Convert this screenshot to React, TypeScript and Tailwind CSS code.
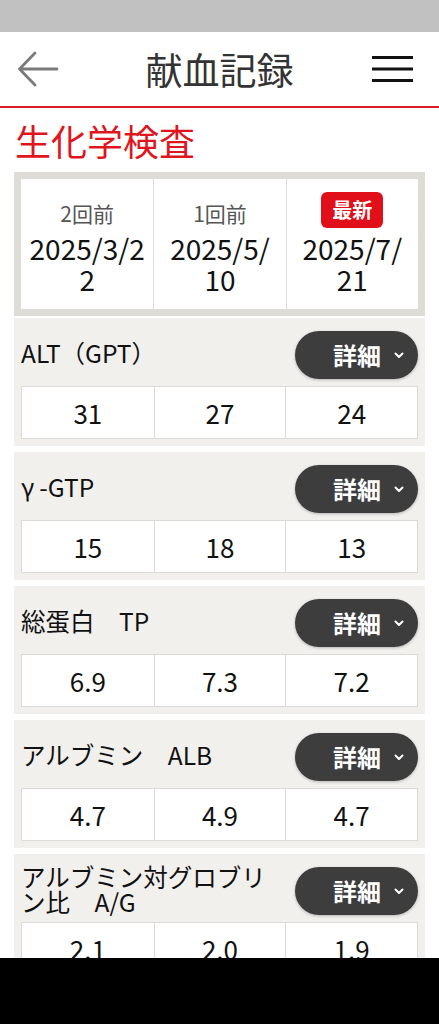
import React from "react";

const items = [
  { label: "ALT（GPT）", values: ["31", "27", "24"] },
  { label: "γ-GTP", values: ["15", "18", "13"] },
  { label: "総蛋白　TP", values: ["6.9", "7.3", "7.2"] },
  { label: "アルブミン　ALB", values: ["4.7", "4.9", "4.7"] },
  { label: "アルブミン対グロブリン比　A/G", values: ["2.1", "2.0", "1.9"] },
];

const dates = [
  { tag: "2回前", lines: ["2025/3/2", "2"] },
  { tag: "1回前", lines: ["2025/5/", "10"] },
  { tag: "最新", lines: ["2025/7/", "21"], latest: true },
];

function DetailButton() {
  return (
    <button className="flex h-[48px] w-[123px] shrink-0 items-center justify-end gap-[12px] rounded-full bg-[#3d3d3d] pr-[13px] shadow-[0_1px_3px_rgba(0,0,0,0.25)]">
      <span className="text-[24px] font-bold leading-none text-white">詳細</span>
      <svg width="12" height="12" viewBox="0 0 12 12" fill="none">
        <path d="M2.5 4.5 6 8l3.5-3.5" stroke="#fff" strokeWidth="2" strokeLinecap="round" strokeLinejoin="round" />
      </svg>
    </button>
  );
}

export default function App() {
  return (
    <div
      className="min-h-[1024px] bg-white text-[#222]"
      style={{ fontFamily: '"Noto Sans CJK JP", "Noto Sans", sans-serif' }}
    >
      <div className="h-[32px] bg-[#c1c1c1]" />

      {/* ヘッダー */}
      <header className="flex h-[76px] items-center justify-between border-b-2 border-[#d81c24] pl-[17px] pr-[26px]">
        <svg width="42" height="42" viewBox="0 0 42 42" fill="none">
          <path d="M40 21H3M18 5 2.5 21 18 37" stroke="#7a7a7a" strokeWidth="2.8" strokeLinecap="round" strokeLinejoin="round" />
        </svg>
        <h1 className="ml-[8px] text-[37px] font-normal leading-none text-[#333]">献血記録</h1>
        <svg width="41" height="28" viewBox="0 0 41 28" fill="none">
          <path d="M0 2.5h41M0 14h41M0 25.5h41" stroke="#111" strokeWidth="3" />
        </svg>
      </header>

      <h2 className="h-[64px] px-[15px] pt-[12px] text-[36px] leading-[40px] text-[#e0161e]">生化学検査</h2>

      <div className="flex flex-col gap-[6px] px-[14px]">
        {/* 日付ヘッダー */}
        <div className="mb-[-4px] bg-[#dedcd6] p-[7px]">
          <div className="grid grid-cols-3 bg-white">
            {dates.map((d, i) => (
              <div
                key={d.tag}
                className={`flex h-[130px] flex-col items-center pt-[11px] ${i > 0 ? "border-l border-[#dedcd6]" : ""}`}
              >
                <div className="flex h-[40px] items-center">
                  {d.latest ? (
                    <span className="rounded-[6px] bg-[#e10f1a] px-[11px] py-[3px] text-[20px] font-bold leading-[30px] text-white">
                      {d.tag}
                    </span>
                  ) : (
                    <span className="pt-[6px] text-[21px] leading-none text-[#555]">{d.tag}</span>
                  )}
                </div>
                <div className="mt-[3px] text-center text-[28px] leading-[31px] text-[#111]">
                  {d.lines[0]}
                  <br />
                  {d.lines[1]}
                </div>
              </div>
            ))}
          </div>
        </div>

        {/* 項目 */}
        {items.map((it) => (
          <div key={it.label} className="bg-[#f1f0ed] px-[7px] pb-[7px]">
            <div className="flex min-h-[68px] items-center justify-between gap-[20px] pb-[7px] pt-[13px]">
              <div className="mt-[-5px] max-w-[262px] text-[24.5px] leading-[25px] text-[#111]">
                {it.label.startsWith("γ") ? (
                  <>
                    <span className="mr-[5px]">γ</span>
                    {it.label.slice(1)}
                  </>
                ) : (
                  it.label
                )}
              </div>
              <DetailButton />
            </div>
            <div className="grid h-[53px] grid-cols-3 border border-[#dcdad5] bg-white">
              {it.values.map((v, i) => (
                <div
                  key={i}
                  className={`flex items-center justify-center text-[26px] text-[#111] ${i > 0 ? "border-l border-[#dcdad5]" : ""}`}
                >
                  {v}
                </div>
              ))}
            </div>
          </div>
        ))}
      </div>

      <div className="fixed bottom-0 left-0 right-0 h-[66px] bg-black" />
    </div>
  );
}
